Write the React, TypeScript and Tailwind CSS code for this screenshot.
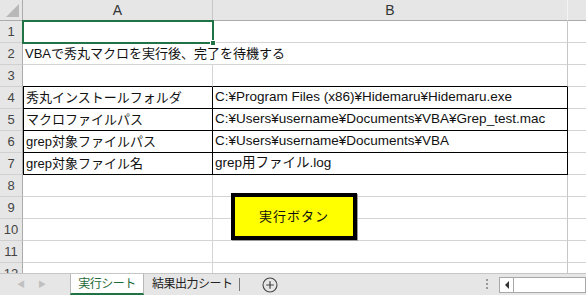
import React from "react";

const font = { fontFamily: '"Liberation Sans", "Noto Sans CJK JP", sans-serif' };

function RowHead({ n }: { n: number }) {
  return (
    <div className="w-[23px] shrink-0 h-full bg-[#e6e6e6] border-r border-b border-r-[#ababab] border-b-[#d0d0d0] flex items-center justify-center text-[13px] text-[#444]">
      {n}
    </div>
  );
}

export default function App() {
  const tableRows: [string, string][] = [
    ["秀丸インストールフォルダ", "C:¥Program Files (x86)¥Hidemaru¥Hidemaru.exe"],
    ["マクロファイルパス", "C:¥Users¥username¥Documents¥VBA¥Grep_test.mac"],
    ["grep対象ファイルパス", "C:¥Users¥username¥Documents¥VBA"],
    ["grep対象ファイル名", "grep用ファイル.log"],
  ];
  const emptyRow = (n: number, bottomBlack = false) => (
    <div key={n} className="flex h-[22px]">
      <RowHead n={n} />
      <div className={`w-[190px] shrink-0 border-r border-b border-r-[#d4d4d4] ${bottomBlack ? "border-b-black" : "border-b-[#d4d4d4]"}`} />
      <div className={`w-[355px] shrink-0 border-r border-b border-r-[#c6c6c6] ${bottomBlack ? "border-b-black" : "border-b-[#d4d4d4]"}`} />
      <div className="flex-1 border-b border-[#d4d4d4]" />
    </div>
  );
  return (
    <div className="w-[586px] h-[295px] bg-white overflow-hidden relative text-[#111]" style={font}>
      <div className="h-[273px] overflow-hidden relative">
        {/* column header */}
        <div className="flex h-[21px]">
          <div className="w-[23px] shrink-0 bg-[#e6e6e6] border-r border-b border-r-[#ababab] border-b-[#ababab] flex items-end justify-end p-[3px]">
            <svg width="13" height="13" viewBox="0 0 13 13">
              <polygon points="13,0 13,13 0,13" fill="#b8b8b8" />
            </svg>
          </div>
          <div className="w-[190px] shrink-0 bg-[#e6e6e6] border-r border-b border-r-[#c6c6c6] border-b-[#ababab] flex items-center justify-center text-[14px] text-[#333]">
            A
          </div>
          <div className="w-[355px] shrink-0 bg-[#e6e6e6] border-r border-b border-r-[#f4f4f4] border-b-[#ababab] flex items-center justify-center text-[14px] text-[#333]">
            B
          </div>
          <div className="flex-1 bg-[#e6e6e6] border-b border-[#ababab]" />
        </div>
        {emptyRow(1)}
        {/* row 2 */}
        <div className="flex h-[22px]">
          <RowHead n={2} />
          <div className="w-[545px] shrink-0 border-r border-b border-r-[#c6c6c6] border-b-[#d4d4d4] flex items-center pl-[2px] text-[13px] whitespace-nowrap">
            VBAで秀丸マクロを実行後、完了を待機する
          </div>
          <div className="flex-1 border-b border-[#d4d4d4]" />
        </div>
        {emptyRow(3, true)}
        {tableRows.map(([a, b], i) => (
          <div key={i} className="flex h-[22px]">
            <RowHead n={4 + i} />
            <div className="w-[190px] shrink-0 border-l border-r border-b border-black flex items-center pl-[2px] text-[13px] whitespace-nowrap">
              {a}
            </div>
            <div className="w-[355px] shrink-0 border-r border-b border-black flex items-center pl-[2px] text-[13.5px] whitespace-nowrap">
              {b}
            </div>
            <div className="flex-1 border-b border-[#d4d4d4]" />
          </div>
        ))}
        {emptyRow(8)}
        {emptyRow(9)}
        {emptyRow(10)}
        {emptyRow(11)}
        {emptyRow(12)}

        {/* selection */}
        <div className="absolute left-[22px] top-[20px] w-[192px] h-[24px] border-2 border-[#217346]" />
        <div className="absolute left-[210px] top-[40px] w-[6px] h-[6px] bg-[#217346] border border-white" />

        {/* button shape */}
        <div className="absolute left-[231px] top-[193px] w-[126px] h-[47px] bg-black p-[4px] shadow-[1px_1px_0_#9a9a9a]">
          <div className="w-full h-full bg-[#ffff00] flex items-center justify-center text-[13px] tracking-[1px]">
            実行ボタン
          </div>
        </div>
      </div>

      {/* tab bar */}
      <div className="h-[22px] bg-[#e6e6e6] border-t border-[#c6c6c6] flex items-start relative">
        <div className="w-[70px] shrink-0 h-full flex items-center text-[#c0c0c0] text-[8px]">
          <span className="ml-[17px]">◀</span>
          <span className="ml-[13px]">▶</span>
        </div>
        <div className="w-[74px] shrink-0 h-[21px] bg-white border-l border-r border-[#b8b8b8] border-b-2 border-b-[#217346] flex items-center justify-center text-[12px] tracking-[-0.5px] text-[#1e6b36]">
          実行シート
        </div>
        <div className="w-[95px] shrink-0 pl-[8px] h-[20px] flex items-center text-[12px] tracking-[-0.5px] text-[#222] whitespace-nowrap">
          結果出力シート
        </div>
        <div className="mt-[4px] w-px h-[13px] bg-[#777] shrink-0" />
        <div className="ml-[22px] mt-[3px] shrink-0">
          <svg width="16" height="16" viewBox="0 0 16 16">
            <circle cx="8" cy="8" r="7" fill="none" stroke="#444" strokeWidth="1.1" />
            <path d="M8 4.2V11.8M4.2 8H11.8" stroke="#444" strokeWidth="1.2" />
          </svg>
        </div>
        <div className="ml-[208px] mt-[5px] flex flex-col gap-[2px] shrink-0">
          <div className="w-[2px] h-[2px] bg-[#999]" />
          <div className="w-[2px] h-[2px] bg-[#999]" />
          <div className="w-[2px] h-[2px] bg-[#999]" />
        </div>
        <div className="ml-[11px] mt-[3px] flex-1 h-[16px] bg-white border border-[#a8a8a8] flex items-center">
          <div className="w-[14px] h-full border-r border-[#a8a8a8] flex items-center justify-center">
            <svg width="6" height="8" viewBox="0 0 6 8">
              <polygon points="5,0 5,8 1,4" fill="#333" />
            </svg>
          </div>
        </div>
      </div>
    </div>
  );
}
